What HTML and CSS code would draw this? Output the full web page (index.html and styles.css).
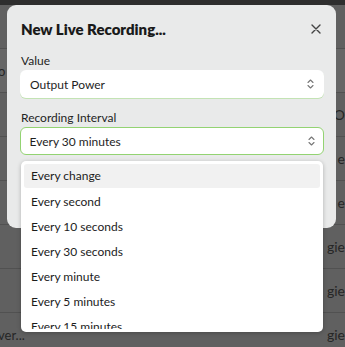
FILE: index.html
```html
<!DOCTYPE html>
<html>
<head>
<meta charset="utf-8">
<link rel="stylesheet" href="styles.css">
</head>
<body>
<div class="page">
  <div class="topbar"></div>
  <div class="row"><span class="l"></span><span class="r"></span></div>
  <div class="row band"><span class="l">o</span><span class="r"></span></div>
  <div class="row"><span class="l"></span><span class="r">O</span></div>
  <div class="row"><span class="l"></span><span class="r">e</span></div>
  <div class="row"><span class="l"></span><span class="r">e</span></div>
  <div class="row"><span class="l"></span><span class="r">gie</span></div>
  <div class="row"><span class="l"></span><span class="r">gie</span></div>
  <div class="row"><span class="l">ver...</span><span class="r">gie</span></div>
</div>

<div class="modal">
  <div class="modal-head">
    <h1 class="title">New Live Recording...</h1>
    <svg class="close" width="10" height="10" viewBox="0 0 10 10"><path d="M1 1L9 9M9 1L1 9" stroke="#444" stroke-width="1.4" stroke-linecap="round"/></svg>
  </div>
  <label class="label">Value</label>
  <div class="select select-plain">
    <span>Output Power</span>
    <svg class="chev" width="7" height="10" viewBox="0 0 7 10"><path d="M1 3.5L3.5 1L6 3.5M1 6.5L3.5 9L6 6.5" fill="none" stroke="#777" stroke-width="1.1" stroke-linecap="round" stroke-linejoin="round"/></svg>
  </div>
  <label class="label label2">Recording Interval</label>
  <div class="select select-focus">
    <span>Every 30 minutes</span>
    <svg class="chev" width="7" height="10" viewBox="0 0 7 10"><path d="M1 3.5L3.5 1L6 3.5M1 6.5L3.5 9L6 6.5" fill="none" stroke="#777" stroke-width="1.1" stroke-linecap="round" stroke-linejoin="round"/></svg>
  </div>
</div>

<div class="dropdown">
  <div class="list">
    <div class="item active">Every change</div>
    <div class="item">Every second</div>
    <div class="item">Every 10 seconds</div>
    <div class="item">Every 30 seconds</div>
    <div class="item">Every minute</div>
    <div class="item">Every 5 minutes</div>
    <div class="item">Every 15 minutes</div>
  </div>
</div>
</body>
</html>
```
FILE: styles.css
```css
html, body {
  margin: 0;
  padding: 0;
}
body {
  width: 345px;
  height: 347px;
  overflow: hidden;
  background: #606060;
  font-family: "Lato", "Noto Sans", sans-serif;
  position: relative;
}
.page {
  display: flex;
  flex-direction: column;
}
.topbar {
  height: 5px;
  background: #2e2e2e;
}
.row {
  height: 43px;
  border-bottom: 1px solid #515151;
  display: flex;
  justify-content: space-between;
  align-items: center;
  font-size: 13px;
  color: #262626;
}
.band {
  background: #666666;
}
.row .l {
  margin-left: -2px;
}
.row .r {
  margin-right: 0;
  font-size: 14px;
}
.modal {
  position: absolute;
  left: 7px;
  top: 5px;
  width: 329px;
  height: 223px;
  box-sizing: border-box;
  background: #e9eaea;
  border-radius: 9px;
  padding: 0 12px 0 13px;
  display: flex;
  flex-direction: column;
}
.modal-head {
  display: flex;
  align-items: center;
  justify-content: space-between;
  height: 44px;
  padding-top: 3px;
  box-sizing: border-box;
}
.title {
  margin: 0 0 0 1px;
  font-size: 15px;
  font-weight: 800;
  color: #1a1a1a;
  letter-spacing: 0;
}
.close {
  margin-right: 3px;
}
.label {
  font-size: 12px;
  color: #242424;
  margin-top: 4px;
  height: 16px;
  line-height: 16px;
  padding-left: 1px;
}
.label2 {
  margin-top: 12px;
}
.select {
  margin-top: 1px;
  height: 28px;
  box-sizing: border-box;
  background: #ffffff;
  border-radius: 6px;
  display: flex;
  align-items: center;
  justify-content: space-between;
  padding: 0 10px 0 10px;
  font-size: 12px;
  color: #1e1e1e;
}
.select-plain {
  box-shadow: 0 1px 0 #c3e3b4;
}
.select-focus {
  border: 1.5px solid #93d372;
  padding-left: 8.5px;
  padding-right: 8.5px;
}
.dropdown {
  position: absolute;
  left: 21px;
  top: 161px;
  width: 302px;
  height: 171px;
  box-sizing: border-box;
  background: #ffffff;
  border-radius: 5px;
  box-shadow: 0 1px 4px rgba(0,0,0,0.25);
  padding: 3px;
}
.list {
  height: 165px;
  overflow: hidden;
}
.item {
  height: 25px;
  line-height: 25px;
  padding-left: 7px;
  font-size: 12px;
  color: #1c1c1c;
  border-radius: 3px;
}
.item.active {
  height: 24px;
  line-height: 24px;
  margin-bottom: 1px;
  background-color: #f1f1f1;
  background-image: radial-gradient(#e4e4e4 0.6px, transparent 0.7px);
  background-size: 4px 4px;
}
```
